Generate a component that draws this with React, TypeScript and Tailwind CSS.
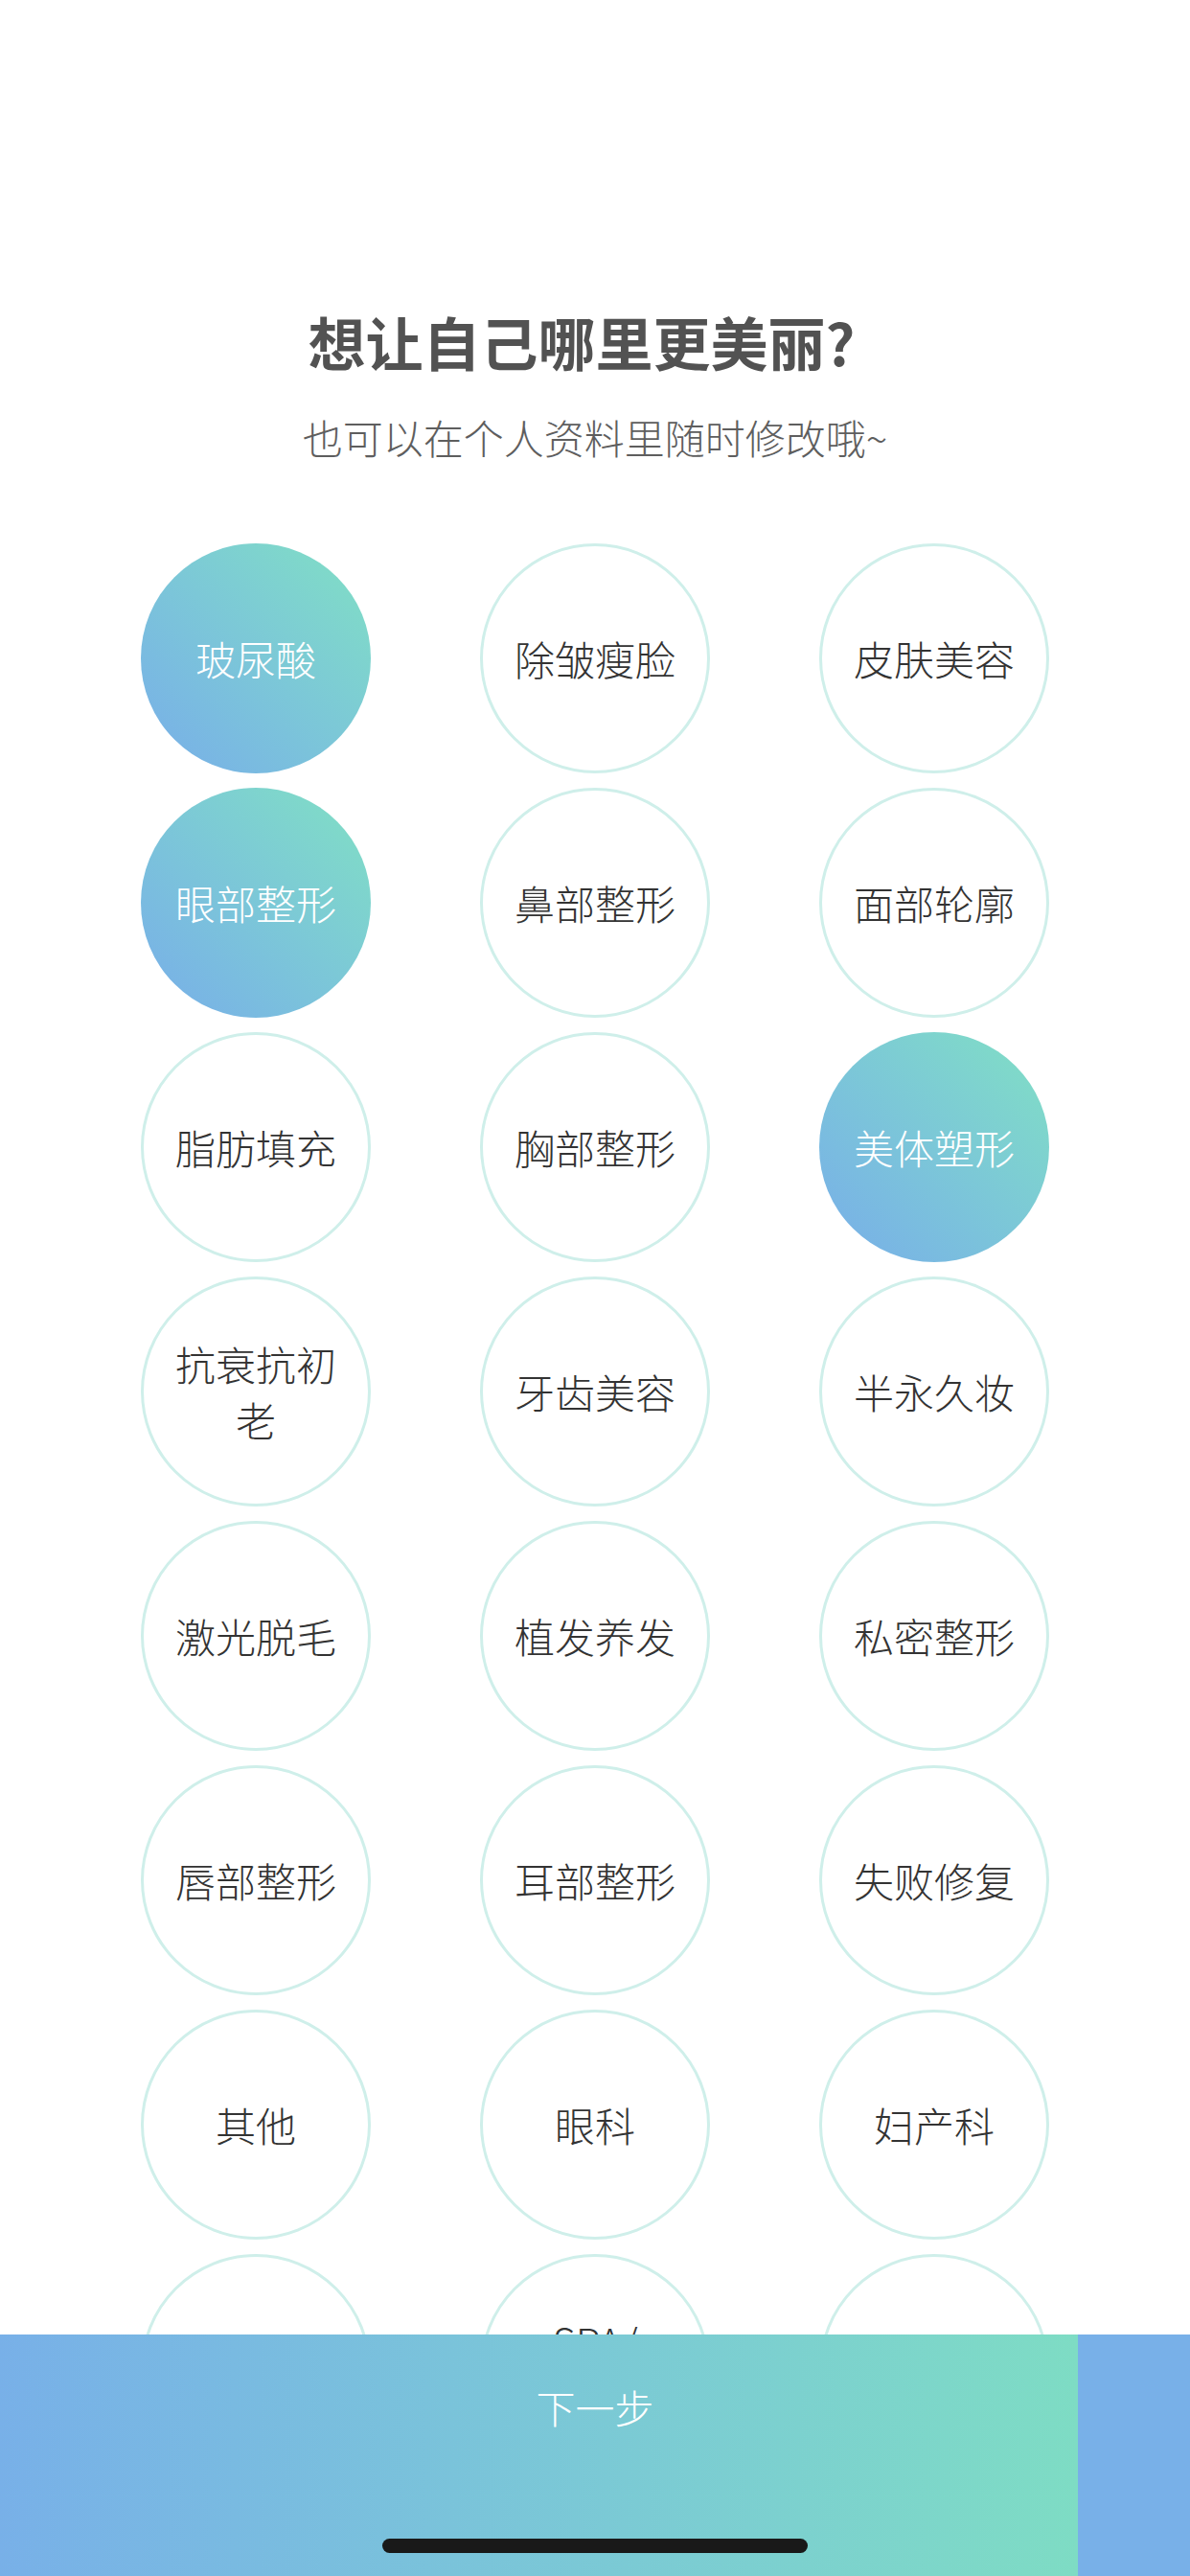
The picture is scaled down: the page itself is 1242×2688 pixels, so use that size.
const items: { label: string; selected?: boolean }[] = [
  { label: '玻尿酸', selected: true },
  { label: '除皱瘦脸' },
  { label: '皮肤美容' },
  { label: '眼部整形', selected: true },
  { label: '鼻部整形' },
  { label: '面部轮廓' },
  { label: '脂肪填充' },
  { label: '胸部整形' },
  { label: '美体塑形', selected: true },
  { label: '抗衰抗初老' },
  { label: '牙齿美容' },
  { label: '半永久妆' },
  { label: '激光脱毛' },
  { label: '植发养发' },
  { label: '私密整形' },
  { label: '唇部整形' },
  { label: '耳部整形' },
  { label: '失败修复' },
  { label: '其他' },
  { label: '眼科' },
  { label: '妇产科' },
  { label: '中医' },
  { label: 'SPA/\n养生' },
  { label: '口腔' },
];

const font = { fontFamily: '"Noto Sans CJK SC", "Noto Sans", sans-serif' };

export default function App() {
  return (
    <div className="relative h-[2688px] w-[1242px] overflow-hidden bg-white" style={font}>
      <div className="flex flex-col items-center pt-[316px]">
        <h1 className="-ml-[28px] text-[60px] font-bold leading-[80px] text-[#525252]">想让自己哪里更美丽?</h1>
        <p className="mt-[30px] text-[42px] font-light leading-[60px] text-[#5e5e5e]">
          也可以在个人资料里随时修改哦~
        </p>
        <div className="mt-[81px] grid grid-cols-[240px_240px_240px] gap-x-[114px] gap-y-[15px]">
          {items.map((item) => (
            <div
              key={item.label}
              className={
                item.selected
                  ? 'flex h-[240px] w-[240px] items-center justify-center rounded-full bg-gradient-to-tr from-[#78ade9] to-[#81e0c3] text-white'
                  : 'flex h-[240px] w-[240px] items-center justify-center rounded-full border-[3px] border-[#cfefea] text-[#333333]'
              }>
              <span className="w-[180px] whitespace-pre-line text-center text-[42px] font-light leading-[58px]">
                {item.label}
              </span>
            </div>
          ))}
        </div>
      </div>

      <div className="absolute bottom-0 left-0 flex h-[252px] w-full">
        <div className="relative flex h-full w-[1125px] justify-center bg-gradient-to-r from-[#78b0e8] to-[#7edcc4]">
          <span className="ml-[117px] mt-[47px] text-[41px] font-light leading-[56px] text-white">下一步</span>
        </div>
        <div className="h-full flex-1 bg-[#78b0e8]" />
        <div className="absolute bottom-[24px] left-[399px] h-[15px] w-[444px] rounded-full bg-[#191919]" />
      </div>
    </div>
  );
}
